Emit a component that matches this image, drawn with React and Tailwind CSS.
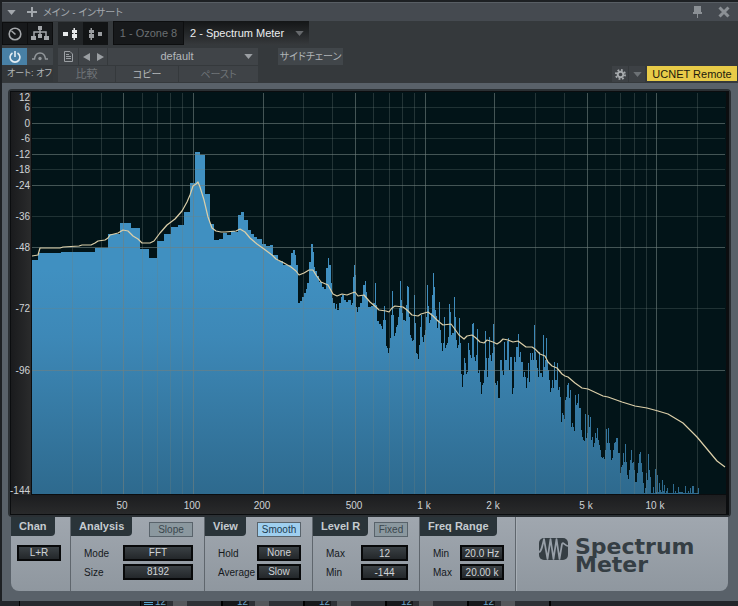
import React, { useState } from "react";

// Level bins as "x,y" steps in plot units, each one holds until the next.
const BINS = `32,260 38,253 61,252 95,248 108,234 120,223 131,228 140,249 149,258 157,241 164,234 171,227 178,225
184,212 190,183 195,152 200,155 205,194 210,224 214,240 219,239 223,233 227,235 231,231 235,232 238,215 241,212
244,220 248,230 251,234 254,237 257,239 262,244 266,246 270,245 273,255 278,261 283,265 291,253 293,250 295,255
296,265 298,303 300,301 302,297 304,293 306,289 307,283 309,262 311,244 313,252 314,267 315,271 317,276 319,282
322,287 324,289 326,268 328,258 329,265 331,283 332,298 333,303 335,309 336,304 337,310 339,303 341,297 342,295
344,300 346,302 348,300 351,305 352,303 353,277 354,265 355,275 356,307 357,312 358,307 360,303 362,295 363,285
365,281 366,292 367,300 368,307 371,306 373,303 375,283 376,305 377,321 379,324 381,326 382,329 383,320 384,306
385,320 386,346 387,348 388,353 389,348 390,338 391,315 392,291 393,315 394,336 395,333 396,327 397,325 398,317
399,308 400,281 401,300 402,313 403,320 405,321 406,305 407,286 408,287 409,317 410,335 411,338 412,341 413,340
414,295 415,323 416,353 417,354 418,359 419,345 420,327 421,315 422,337 423,342 424,335 425,330 426,317 427,285
428,306 429,323 430,320 431,313 432,295 433,273 434,287 435,310 436,316 437,328 438,320 439,302 440,330 441,343
442,351 443,343 444,317 445,348 446,345 447,343 448,337 449,304 450,312 451,335 452,333 454,297 455,317 456,340
457,348 458,345 459,318 460,343 461,374 462,387 463,375 464,358 465,363 466,374 467,372 468,343 469,350 470,355
471,358 472,324 473,323 474,357 475,361 476,355 477,329 478,373 479,370 480,382 481,394 482,385 483,383 484,370
485,331 486,358 487,377 488,358 489,337 490,355 491,361 492,353 493,324 494,347 495,383 496,385 497,381 498,398
500,360 502,371 503,375 504,342 505,360 507,341 508,338 509,370 510,357 512,394 513,388 514,357 515,362 516,347
518,334 519,357 520,352 521,362 523,377 524,372 525,377 526,388 527,378 528,363 529,382 530,353 531,360 532,353
533,360 534,325 535,352 536,360 537,368 538,377 539,352 540,373 542,377 543,335 544,367 545,360 546,338 547,360
548,370 549,380 550,392 551,388 552,380 553,388 554,362 555,380 557,363 558,390 559,387 560,397 561,422 562,413
563,415 564,419 565,400 566,397 567,385 568,383 569,398 570,390 571,427 572,423 573,427 574,431 575,395 576,405
577,403 578,394 579,408 581,430 582,437 583,440 584,441 585,414 586,438 587,433 588,415 589,427 590,417 591,440
592,437 593,447 594,443 595,433 596,438 597,428 598,440 599,445 600,450 601,457 602,458 603,457 604,459 605,450
606,429 607,443 608,428 609,443 610,450 611,460 612,458 613,450 614,443 615,442 616,438 618,453 620,473 621,467
622,465 623,453 624,462 625,444 626,462 627,475 628,479 629,470 630,460 631,450 632,463 633,462 634,470 635,482
637,473 638,463 639,454 640,452 641,463 642,472 643,483 644,493 645,488 646,473 647,480 648,454 649,470 650,477
651,493 653,487 654,493 655,469 656,492 657,475 658,492 659,483 660,490 661,492 662,480 663,491 664,485 665,493
666,491 667,488 668,493 673,484 674,493 675,491 676,493 678,487 679,492 683,493 685,486 686,493 688,491 689,493
690,488 691,493 692,486 694,493 698,488 699,494`
  .split(/\s+/)
  .map((pair) => pair.split(",").map(Number));

const AVERAGE =
  "32,256 38,255 40,248 60,248 63,247 79,246 82,245 91,245 95,243 98,241 105,240 108,238 110,235 118,233 123,230 128,231 133,236 138,239 142,243 150,243 154,241 160,233 167,225 175,219 182,211 187,202 190,195 193,186 196,184 198,182 200,187 204,200 208,217 212,228 216,231 221,232 225,232 236,231 240,229 245,232 250,238 257,244 264,249 272,255 276,259 284,263 291,267 296,271 299,275 304,273 309,270 313,270 316,275 321,282 328,285 333,294 337,296 342,294 347,295 352,293 355,292 358,296 364,295 370,302 376,307 379,310 386,311 389,312 392,308 395,306 403,307 407,310 412,315 418,316 421,314 428,312 433,316 438,321 443,325 451,324 454,328 459,335 464,339 467,336 472,335 476,338 480,342 484,343 487,340 493,342 497,344 500,342 503,339 508,340 513,342 518,341 526,347 532,347 535,349 540,354 545,356 548,362 552,366 557,368 562,374 565,376 568,377 575,383 582,388 588,389 603,396 608,397 622,402 635,406 647,408 658,411 668,414 683,423 697,437 707,449 717,461 725,467";

const LEVELS = [
  { db: "12", y: 97, line: null },
  { db: "6", y: 107, line: 107 },
  { db: "0", y: 123, line: 123, major: true },
  { db: "-6", y: 138, line: 138 },
  { db: "-12", y: 154, line: 154, major: true },
  { db: "-18", y: 169, line: 169 },
  { db: "-24", y: 185, line: 185, major: true },
  { db: "-36", y: 216, line: 216 },
  { db: "-48", y: 247, line: 247, major: true },
  { db: "-72", y: 308, line: 308 },
  { db: "-96", y: 370, line: 370, major: true },
  { db: "-144", y: 490, line: null },
];

const FREQS = [
  { x: 123, label: "50" },
  { x: 193, label: "100" },
  { x: 263, label: "200" },
  { x: 355, label: "500" },
  { x: 425, label: "1 k" },
  { x: 494, label: "2 k" },
  { x: 587, label: "5 k" },
  { x: 656, label: "10 k" },
];

const MINOR_FREQS = [72, 101, 142, 157, 170, 182, 303, 332, 373, 389, 402, 414, 535, 564, 605, 620, 634, 646, 697];

const binsPath =
  "M32 494" + BINS.map(([x, y]) => `H${x}V${y}`).join("") + "V494Z";

const SpectrumChart = () => (
  <svg
    viewBox="10 91 719 424"
    className="block h-auto w-full"
    role="img"
    aria-label="Spectrum"
  >
    <defs>
      <linearGradient id="bins" gradientUnits="userSpaceOnUse" x1="0" y1="270" x2="0" y2="494">
        <stop offset="0" stopColor="#4090c1" />
        <stop offset="0.3" stopColor="#3d88b7" />
        <stop offset="1" stopColor="#2e6a8e" />
      </linearGradient>
      <linearGradient id="side" x1="0" y1="0" x2="1" y2="0">
        <stop offset="0" stopColor="#1a1b1d" />
        <stop offset="1" stopColor="#2a2b2c" />
      </linearGradient>
      <linearGradient id="base" x1="0" y1="0" x2="0" y2="1">
        <stop offset="0" stopColor="#1c1d1f" />
        <stop offset="1" stopColor="#292a2b" />
      </linearGradient>
    </defs>

    <rect x="10" y="91" width="719" height="424" fill="#0b0d0f" />
    <rect x="11" y="92" width="20" height="403" fill="url(#side)" />
    <rect x="11" y="495" width="715" height="19" fill="url(#base)" />
    <rect x="32" y="92" width="694" height="402" fill="#021418" />

    <path d={binsPath} fill="url(#bins)" shapeRendering="crispEdges" />

    <g shapeRendering="crispEdges" fill="#71807e">
      {LEVELS.filter((l) => l.line).map((l) => (
        <rect key={l.db} x="32" y={l.line} width="693" height="1" opacity={l.major ? 0.6 : 0.28} />
      ))}
      {FREQS.map((f) => (
        <rect key={f.x} x={f.x} y="93" width="1" height="401" opacity="0.6" />
      ))}
      {MINOR_FREQS.map((x) => (
        <rect key={x} x={x} y="93" width="1" height="401" opacity="0.3" />
      ))}
    </g>

    <polyline points={AVERAGE} fill="none" stroke="#dccfa9" strokeWidth="1.2" strokeLinejoin="round" />

    <g fill="#cfd3d6" fontSize="10">
      {LEVELS.map((l) => (
        <text key={l.db} x="30" y={l.y + 4} textAnchor="end">
          {l.db}
        </text>
      ))}
      {FREQS.map((f) => (
        <text key={f.label} x={f.x - 1} y="509" textAnchor="middle">
          {f.label}
        </text>
      ))}
    </g>
  </svg>
);

const DownArrow = ({ className }) => (
  <svg viewBox="0 0 10 6" className={`h-[5px] w-[9px] ${className || ""}`} fill="currentColor" aria-hidden="true">
    <path d="M0 0h10L5 6z" />
  </svg>
);

const TitleBar = () => (
  <div className="flex h-[19px] items-center border-t border-[#585e64] bg-[#454a50] pr-[8px] pl-[5px] text-[#a3a8ad]">
    <button type="button" aria-label="Window menu" className="flex">
      <DownArrow />
    </button>
    <button type="button" aria-label="Add insert" className="ml-[11px] flex">
      <svg viewBox="0 0 10 10" className="size-[10px]" fill="currentColor">
        <path d="M4 0h2v4h4v2H6v4H4V6H0V4h4z" />
      </svg>
    </button>
    <h1 className="ml-[6px] flex-1 text-[10px] [font-feature-settings:'palt']">メイン - インサート</h1>
    <button type="button" aria-label="Pin window" className="flex text-[#8b9095]">
      <svg viewBox="0 0 9 12" className="h-3 w-[9px]" fill="currentColor">
        <path d="M1 0h7v6h1v2H5v4H4V8H0V6h1z" />
      </svg>
    </button>
    <button type="button" aria-label="Close" className="ml-4 flex text-[#8b9095]">
      <svg viewBox="0 0 12 12" className="size-3" stroke="currentColor" strokeWidth="3">
        <path d="M1.500 1.500l9 9M10.500 1.500l-9 9" />
      </svg>
    </button>
  </div>
);

const DeviceButtons = () => (
  <div className="w-[51px]">
    <div className="mt-px flex h-[23px] gap-px bg-[#0d0e0f] p-px text-[#a4a7aa]">
      <button type="button" aria-label="Controls" className="flex flex-1 items-center justify-center bg-[#17191b]">
        <svg viewBox="0 0 14 14" className="size-[14px]" fill="none" stroke="currentColor" strokeWidth="1.600">
          <circle cx="7" cy="7" r="5.800" />
          <path d="M7.500 7.500L3.500 4" />
        </svg>
      </button>
      <button type="button" aria-label="Routing" className="flex flex-1 items-center justify-center bg-[#17191b]">
        <svg viewBox="0 0 18 15" className="h-[15px] w-[18px]" fill="currentColor">
          <path d="M7 0h4v4H7zM0 10h5v4H0zM13 10h5v4h-5zM7 8h4v4H7z" />
          <path d="M9 3v6M3 11V6h12v5" fill="none" stroke="currentColor" strokeWidth="1.500" />
        </svg>
      </button>
    </div>
    <div className="mt-[3px] flex h-[17px]">
      <button type="button" aria-label="Activate" aria-pressed="true" className="flex w-[25px] items-center justify-center bg-[#4880a5] text-[#e4edf3]">
        <svg viewBox="0 0 12 12" className="size-3" fill="none" stroke="currentColor" strokeWidth="1.600">
          <path d="M3.500 2a4.900 4.900 0 1 0 5 0M6 0v6" />
        </svg>
      </button>
      <button type="button" aria-label="Bypass" className="flex flex-1 items-center justify-center bg-[#404549] text-[#92979b]">
        <svg viewBox="0 0 16 9" className="h-[9px] w-4" fill="none" stroke="currentColor" strokeWidth="1.500">
          <path d="M0 7h2.500C3 3 5 1 8 1s5 2 5.500 6H16" />
          <circle cx="8" cy="6.500" r="1.700" fill="currentColor" stroke="none" />
        </svg>
      </button>
    </div>
    <button type="button" className="block h-[17px] w-full bg-[#33373a] pl-[5px] text-left text-[9px] whitespace-nowrap text-[#b3b7ba] [font-feature-settings:'palt']">
      オート: オフ
    </button>
  </div>
);

const InsertTabs = () => (
  <div className="flex h-6 items-start gap-[5px]">
    <div className="mt-px flex h-[23px] w-[50px] text-[#9a9da0]">
      <button type="button" aria-label="Pre fader" aria-pressed="true" className="flex flex-1 items-center justify-center bg-[#222527] text-[#e8eaeb]">
        <svg viewBox="0 0 15 12" className="h-3 w-[15px]" fill="currentColor">
          <path d="M0 4h5v4H0zM10.500 0h1.500v12h-1.500zM9 2h5v3H9zM9 6h5v4H9z" />
        </svg>
      </button>
      <button type="button" aria-label="Post fader" className="flex flex-1 items-center justify-center bg-[#121415]">
        <svg viewBox="0 0 15 12" className="h-3 w-[15px]" fill="currentColor">
          <path d="M10 4h4v4h-4zM2.500 0H4v12H2.500zM1 2h5v3H1zM1 6h5v4H1z" />
        </svg>
      </button>
    </div>
    <div className="flex h-full text-[11px]" role="tablist">
      <button type="button" role="tab" aria-selected="false" className="h-full w-[71px] border border-[#0d0e0f] bg-[#17191b] text-[#6b6f72]">
        1 - Ozone 8
      </button>
      <button type="button" role="tab" aria-selected="true" className="flex h-full w-[125px] items-center justify-between bg-linear-to-b from-[#141617] to-[#36393c] pr-[5px] pl-[6px] whitespace-nowrap text-[#eceeef]">
        2 - Spectrum Meter
        <DownArrow className="text-[#66696c]" />
      </button>
    </div>
  </div>
);

const PresetBar = () => (
  <div className="mt-[3px] flex h-[17px] text-[#9b9fa3]">
    <button type="button" aria-label="Preset file" className="flex w-5 items-center justify-center bg-[#404448]">
      <svg viewBox="0 0 9 11" className="h-[11px] w-[9px]" fill="none" stroke="currentColor">
        <path d="M.5.500H6L8.500 3v7.500h-8zM2 3.500h3M2 5.500h5M2 7.500h5" />
      </svg>
    </button>
    <div className="ml-px flex w-7 items-center justify-around bg-[#404448]">
      <button type="button" aria-label="Previous preset" className="flex">
        <svg viewBox="0 0 7 8" className="h-2 w-[7px]" fill="currentColor">
          <path d="M7 0v8L0 4z" />
        </svg>
      </button>
      <button type="button" aria-label="Next preset" className="flex">
        <svg viewBox="0 0 7 8" className="h-2 w-[7px]" fill="currentColor">
          <path d="M0 0v8l7-4z" />
        </svg>
      </button>
    </div>
    <div className="relative ml-px w-[150px] bg-[#404448]">
      <select aria-label="Preset" className="block h-[17px] w-full appearance-none p-0 pr-[12px] text-center text-[11px] leading-[17px] text-[#b4b8bb] [text-align-last:center]">
        <option>default</option>
      </select>
      <DownArrow className="pointer-events-none absolute top-[6px] right-[5px]" />
    </div>
    <button type="button" className="ml-5 h-full w-[65px] bg-[#41464a] text-[10px] leading-[17px] whitespace-nowrap text-[#b0b4b7] [font-feature-settings:'palt']">
      サイドチェーン
    </button>
  </div>
);

const PresetActions = () => (
  <div className="mt-px flex h-[16px] gap-px text-[11px] leading-[15px] text-[#6f7478]">
    <button type="button" className="w-[57px] bg-[#3f4347]">比較</button>
    <button type="button" className="w-[62px] bg-[#3f4347] text-[10px] text-[#b4b8bb] [font-feature-settings:'palt']">コピー</button>
    <button type="button" className="w-[79px] bg-[#3f4347] text-[10px] [font-feature-settings:'palt']">ペースト</button>
    <div className="flex-1" />
    <button type="button" aria-label="Settings" className="flex w-4 items-center justify-center bg-[#3d4145] text-[#a6aaad]">
      <svg viewBox="0 0 12 12" className="size-[11px]" fill="none" stroke="currentColor">
        <circle cx="6" cy="6" r="3" strokeWidth="2" />
        <circle cx="6" cy="6" r="5" strokeWidth="2" strokeDasharray="1.960 1.960" />
      </svg>
    </button>
    <button type="button" aria-label="Settings menu" className="mr-px flex w-4 items-center justify-center bg-[#3d4145]">
      <DownArrow className="text-[#6c7175]" />
    </button>
    <button type="button" className="mr-px h-[15px] w-[90px] bg-[#e8cb48] leading-[14px] whitespace-nowrap text-[#1d1a0c]">
      UCNET Remote
    </button>
  </div>
);

const Section = ({ title, className, toggle, pressed, toggleClass, children }) => (
  <section className={`shrink-0 border-r border-[#5f666d] pb-[11px] ${className}`}>
    <div className="flex h-7 items-start justify-between pr-[11px]">
      <h2 className="h-[19px] rounded-br-sm bg-[#2a3439] px-[8px] text-[11px] leading-[18px] font-bold whitespace-nowrap text-[#c5cbd0]">
        {title}
      </h2>
      {toggle && (
        <button
          type="button"
          aria-pressed={pressed}
          className={`mt-[5px] h-[15px] border border-[#59636b] text-[10px] leading-[13px] ${
            pressed ? "bg-[#9fcfef] text-[#1c3c52]" : "bg-[#8b989f] text-[#3a464d]"
          } ${toggleClass}`}
        >
          {toggle}
        </button>
      )}
    </div>
    <div className="flex flex-col gap-[3px] pr-[11px]">{children}</div>
  </section>
);

const controlClass =
  "h-4 appearance-none rounded-none border-2 border-[#08090a] bg-linear-to-b from-[#3b4145] to-[#23272a] p-0 text-center text-[10px] leading-3 text-[#d0d4d7] [text-align-last:center]";

const Choice = ({ label, value, width }) => (
  <label className="flex items-center justify-between pl-[13px]">
    {label}
    <select className={`${controlClass} ${width}`}>
      <option>{value}</option>
    </select>
  </label>
);

const Field = ({ label, value, width }) => {
  const [text, setText] = useState(value);
  return (
    <label className="flex items-center justify-between pl-[13px]">
      {label}
      <input className={`${controlClass} ${width}`} value={text} onChange={(e) => setText(e.target.value)} />
    </label>
  );
};

const Brand = () => (
  <div className="flex flex-1 items-start border-l border-[#a9b0b7] pt-[21px] pl-[22px] text-[#353e44]">
    <svg viewBox="0 0 29 22" className="h-[22px] w-[29px] shrink-0" aria-hidden="true">
      <rect width="29" height="22" rx="5" fill="currentColor" />
      <path
        d="M0 14C2 14 3 10 5 1L8.500 21 11.500 1 14.500 21 17.500 1 20.500 21 23 6C24 3 26 8 29 8"
        fill="none"
        stroke="#979fa8"
        strokeWidth="1.700"
        strokeLinejoin="round"
      />
    </svg>
    <p className="ml-[7px] font-['DejaVu_Sans'] text-[22px] leading-[18px] font-bold">
      Spectrum
      <br />
      Meter
    </p>
  </div>
);

const Controls = () => (
  <div className="mr-[10px] ml-[9px] flex rounded-b-lg bg-linear-to-b from-[#a0a7af] to-[#8f979f] text-[10px] text-[#15191c]">
    <Section title="Chan" className="w-[60px]">
      <select aria-label="Channel" className={`${controlClass} ml-[6px] w-11`}>
        <option>L+R</option>
      </select>
    </Section>
    <Section title="Analysis" className="w-[134px]" toggle="Slope" toggleClass="w-11">
      <Choice label="Mode" value="FFT" width="w-[70px]" />
      <Choice label="Size" value="8192" width="w-[70px]" />
    </Section>
    <Section title="View" className="w-[108px]" toggle="Smooth" pressed toggleClass="w-11">
      <Choice label="Hold" value="None" width="w-11" />
      <Choice label="Average" value="Slow" width="w-11" />
    </Section>
    <Section title="Level R" className="w-[107px]" toggle="Fixed" toggleClass="w-[34px]">
      <Field label="Max" value="12" width="w-[47px]" />
      <Field label="Min" value="-144" width="w-[47px]" />
    </Section>
    <Section title="Freq Range" className="w-24">
      <Field label="Min" value="20.0 Hz" width="w-11" />
      <Field label="Max" value="20.00 k" width="w-11" />
    </Section>
    <Brand />
  </div>
);

// Mixer channels that peek out under the plug-in window.
const MixerStrip = () => (
  <div className="flex h-[5px] overflow-hidden bg-[#22252a] text-[10px] leading-px text-[#6ea6c6]">
    <div className="w-5 border-r border-black" />
    <div className="w-[121px] border-r border-black bg-[#26292e]" />
    {[0, 1, 2, 3, 4].map((n) => (
      <div key={n} className="flex w-[82px] border-r-2 border-black bg-[#2e3136]">
        <div className="w-[26px] bg-[#16181b] pr-px text-right">
          {n === 0 && <div className="float-left mt-px ml-[3px] h-[3px] w-[9px] border-y border-[#58a5cf]" />}
          12
        </div>
        <div className="ml-[6px] w-[14px] bg-[#55585c]" />
      </div>
    ))}
  </div>
);

export default function App() {
  return (
    <div className="w-full overflow-hidden bg-[#1d2023] font-['Liberation_Sans','Noto_Sans_CJK_JP',sans-serif]">
      <div className="mt-[2px] ml-[2px] bg-[#596169]">
        <TitleBar />
        <header className="flex h-[62px] gap-[5px] bg-[#35393c]">
          <DeviceButtons />
          <div className="min-w-0 flex-1">
            <InsertTabs />
            <PresetBar />
            <PresetActions />
          </div>
        </header>
        <main className="pt-[6px] pb-[10px]">
          <div className="mr-[7px] ml-[6px] rounded-sm border-2 border-[#2b3034] bg-[#0b0d0f]">
            <SpectrumChart />
          </div>
          <Controls />
        </main>
      </div>
      <MixerStrip />
    </div>
  );
}
